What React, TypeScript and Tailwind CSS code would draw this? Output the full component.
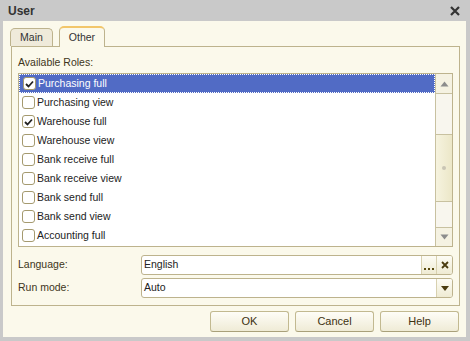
import React from 'react';

const roles = [
  { name: 'Purchasing full', checked: true },
  { name: 'Purchasing view', checked: false },
  { name: 'Warehouse full', checked: true },
  { name: 'Warehouse view', checked: false },
  { name: 'Bank receive full', checked: false },
  { name: 'Bank receive view', checked: false },
  { name: 'Bank send full', checked: false },
  { name: 'Bank send view', checked: false },
  { name: 'Accounting full', checked: false },
];

const Check: React.FC<{ checked: boolean }> = ({ checked }) => (
  <span className="w-[13px] h-[13px] shrink-0 rounded-[3px] border border-[#a59a6f] bg-white flex items-center justify-center">
    {checked && (
      <svg width="9" height="8" viewBox="0 0 9 8">
        <path d="M1 4 L3.5 6.5 L8 1.5" fill="none" stroke="#222" strokeWidth="1.8" />
      </svg>
    )}
  </span>
);

const Tri: React.FC<{ down?: boolean; color?: string }> = ({ down, color = '#8c8c8c' }) => (
  <svg width="9" height="6" viewBox="0 0 9 6">
    <path d={down ? 'M0.5 0.5 H8.5 L4.5 5.5 Z' : 'M0.5 5.5 H8.5 L4.5 0.5 Z'} fill={color} />
  </svg>
);

export default function App() {
  return (
    <div
      className="w-[470px] h-[341px] bg-[#c9c9c9] flex flex-col text-[10.5px] text-[#2b2b2b]"
      style={{ fontFamily: '"Liberation Sans", Arial, sans-serif' }}
    >
      {/* Title bar */}
      <div className="h-[21px] shrink-0 flex items-center justify-between pl-[8px] pr-[10px]">
        <span className="font-bold text-[12px] text-[#333]">User</span>
        <svg width="10" height="10" viewBox="0 0 10 10">
          <path d="M1 1 L9 9 M9 1 L1 9" stroke="#333" strokeWidth="2.2" />
        </svg>
      </div>

      {/* Body */}
      <div className="flex-1 ml-[3px] mr-[4px] mb-[4px] bg-[#fbf9eb] flex flex-col pt-[6px] pl-[7px] pr-[7px]">
        {/* Tabs */}
        <div className="h-[19px] flex items-end gap-[6px] relative z-10">
          <div className="w-[43px] h-[18px] rounded-t-[5px] border border-b-0 border-[#bdb38d] bg-[#efeada] flex items-center justify-center text-[#333]">
            Main
          </div>
          <div className="w-[46px] h-[21px] -mb-px rounded-t-[5px] border border-b-0 border-[#bdb38d] border-t-2 border-t-[#f2c66a] bg-[#fbf9eb] flex items-center justify-center text-[#333]">
            Other
          </div>
        </div>

        {/* Panel */}
        <div className="ml-px w-[449px] h-[260px] border border-[#bdb38d] flex flex-col pt-[9px] px-[6px]">
          <div className="h-[13px] leading-[13px] text-[#3d3520]">Available Roles:</div>
          <div className="mt-[4px] h-[174px] border border-[#bdb38d] bg-white flex">
            <div className="flex-1 flex flex-col">
              {roles.map((r, i) => (
                <div
                  key={r.name}
                  className={
                    'h-[19px] flex items-center gap-[2px] pl-[3px] ' +
                    (i === 0 ? 'bg-[#516bc5] text-white border border-dotted border-white pl-[2px]' : 'text-[#222]')
                  }
                >
                  <Check checked={r.checked} />
                  <span className="leading-[13px]">{r.name}</span>
                </div>
              ))}
            </div>
            {/* Scrollbar */}
            <div className="w-[17px] flex flex-col bg-[#f8f6ee] border-l border-[#c8c1a0]">
              <div className="h-[20px] border-b border-[#c8c1a0] bg-[#f5f2e2] flex items-center justify-center">
                <Tri />
              </div>
              <div className="h-[40px]" />
              <div className="h-[68px] border-y border-[#c8c1a0] bg-gradient-to-r from-[#f6f3df] to-[#ece7c8] flex items-center justify-center">
                <span className="w-[4px] h-[4px] rounded-full bg-[#c9c5b4]" />
              </div>
              <div className="flex-1" />
              <div className="h-[19px] border-t border-[#c8c1a0] bg-[#f5f2e2] flex items-center justify-center">
                <Tri down />
              </div>
            </div>
          </div>

          {/* Language */}
          <div className="mt-[8px] h-[20px] flex items-center">
            <span className="w-[123px] text-[#3d3520]">Language:</span>
            <div className="flex-1 h-[20px] rounded-[3px] border border-[#bdb38d] bg-white flex items-stretch overflow-hidden">
              <span className="flex-1 pl-[2px] flex items-center text-[#222]">English</span>
              <span className="w-[15px] border-l border-[#d8d1b0] bg-gradient-to-b from-[#fdfcf5] to-[#efebd3] flex items-end justify-center pb-[4px]">
                <span className="flex gap-[2px]">
                  <span className="w-[2px] h-[2px] bg-[#5a4a10]" />
                  <span className="w-[2px] h-[2px] bg-[#5a4a10]" />
                  <span className="w-[2px] h-[2px] bg-[#5a4a10]" />
                </span>
              </span>
              <span className="w-[16px] border-l border-[#d8d1b0] bg-gradient-to-b from-[#fdfcf5] to-[#efebd3] flex items-center justify-center">
                <svg width="8" height="8" viewBox="0 0 8 8">
                  <path d="M1 1 L7 7 M7 1 L1 7" stroke="#4a3c10" strokeWidth="1.8" />
                </svg>
              </span>
            </div>
          </div>

          {/* Run mode */}
          <div className="mt-[3px] h-[20px] flex items-center">
            <span className="w-[123px] text-[#3d3520]">Run mode:</span>
            <div className="flex-1 h-[20px] rounded-[3px] border border-[#bdb38d] bg-white flex items-stretch overflow-hidden">
              <span className="flex-1 pl-[2px] flex items-center text-[#222]">Auto</span>
              <span className="w-[16px] border-l border-[#d8d1b0] bg-gradient-to-b from-[#fdfcf5] to-[#efebd3] flex items-center justify-center">
                <svg width="8" height="5" viewBox="0 0 8 5">
                  <path d="M0 0 H8 L4 5 Z" fill="#4a3c10" />
                </svg>
              </span>
            </div>
          </div>
        </div>

        {/* Buttons */}
        <div className="mt-[5px] flex justify-end gap-[6px] pr-0">
          {['OK', 'Cancel', 'Help'].map((b) => (
            <button
              key={b}
              className="w-[79px] h-[21px] rounded-[3px] border border-[#c2b990] border-b-[#a9a07a] bg-gradient-to-b from-[#fefdf7] to-[#efebd6] text-[#3d3210] text-[11px]"
            >
              {b}
            </button>
          ))}
        </div>
      </div>
    </div>
  );
}
